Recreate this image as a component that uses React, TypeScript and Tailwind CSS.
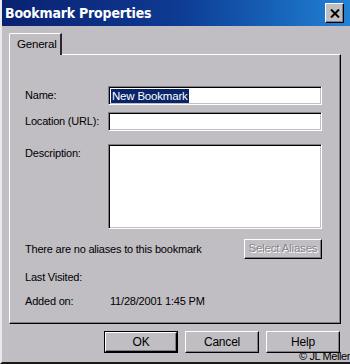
import React from "react";

const sunken =
  "border border-t-[#7f7d82] border-l-[#7f7d82] border-b-white border-r-white shadow-[inset_1px_1px_0_#000,inset_-1px_-1px_0_#c0bdc3] bg-white";
const raised =
  "border border-t-white border-l-white border-b-black border-r-black shadow-[inset_-1px_-1px_0_#807e84]";

function Field({ label, children }: { label: string; children: React.ReactNode }) {
  return (
    <div className="flex items-center">
      <span className="w-[83px]">{label}</span>
      {children}
    </div>
  );
}

function DialogButton({ label, main }: { label: string; main?: boolean }) {
  return (
    <div className={main ? "border border-black" : ""}>
      <button
        className={`${raised} flex items-center justify-center bg-[#c0bdc3] text-[12px] text-black ${
          main ? "w-[72px] h-[20px]" : "w-[74px] h-[22px]"
        }`}
      >
        {label}
      </button>
    </div>
  );
}

export default function App() {
  return (
    <div className="relative w-[350px] h-[364px] overflow-hidden bg-[#c0bdc3] border-l-2 border-l-[#ebe9ee] border-b-2 border-b-[#1a1a1a] flex flex-col text-[11px] tracking-[-0.2px] text-black font-['Liberation_Sans',Arial,sans-serif]">
      {/* title bar */}
      <div className="h-[26px] flex items-center justify-between pl-[3px] pr-[6px] bg-gradient-to-r from-[#0a2171] via-[#0e3a92] to-[#2182d6]">
        <span className="text-white font-bold text-[14px] tracking-[-0.2px] font-['DejaVu_Sans_Condensed','DejaVu_Sans',Verdana,sans-serif]">
          Bookmark Properties
        </span>
        <div className={`${raised} w-[19px] h-[20px] bg-[#c0bdc3] flex items-center justify-center`}>
          <svg width="10" height="9" viewBox="0 0 10 9">
            <path d="M1 0.5 L9 8.5 M9 0.5 L1 8.5" stroke="#000" strokeWidth="2" />
          </svg>
        </div>
      </div>

      {/* tabs + panel */}
      <div className="pl-[7px] pt-[7px]">
        <div className="relative z-10 w-[53px] h-[22px] bg-[#c0bdc3] border-t border-l border-white rounded-tl-[2px] border-r-2 border-r-[#2a282c] flex items-center pl-[7px] text-[11.5px]">
          General
        </div>
        <div className="-mt-[1px] w-[332px] h-[270px] border border-t-white border-l-white border-b-black border-r-black shadow-[inset_-1px_-1px_0_#807e84] pl-[15px] pt-[31px] flex flex-col">
          <Field label="Name:">
            <div className={`${sunken} w-[214px] h-[19px] flex items-center pl-[2px]`}>
              <span className="bg-[#0a246a] text-white px-[1px] leading-[14px] text-[11.5px]">New Bookmark</span>
            </div>
          </Field>
          <div className="mt-[7px]">
            <Field label="Location (URL):">
              <div className={`${sunken} w-[214px] h-[19px]`} />
            </Field>
          </div>
          <div className="mt-[13px] flex items-start">
            <span className="w-[83px] pt-[1px]">Description:</span>
            <div className={`${sunken} w-[214px] h-[85px]`} />
          </div>
          <div className="mt-[10px] flex items-center justify-between w-[297px]">
            <span>There are no aliases to this bookmark</span>
            <div className={`${raised} w-[78px] h-[20px] flex items-center justify-center text-[11.5px] text-[#8a878e] [text-shadow:1px_1px_0_#fff]`}>
              Select Aliases
            </div>
          </div>
          <div className="mt-[11px] h-[14px] flex items-center">Last Visited:</div>
          <div className="mt-[10px] h-[14px] flex items-center">
            <span className="w-[85px]">Added on:</span>
            <span>11/28/2001 1:45 PM</span>
          </div>
        </div>
      </div>

      {/* buttons */}
      <div className="mt-[7px] pl-[102px] flex gap-[7px]">
        <DialogButton label="OK" main />
        <DialogButton label="Cancel" />
        <DialogButton label="Help" />
      </div>

      <span className="absolute right-0 bottom-[-1px] text-[11px] leading-[13px] tracking-[-0.4px]">
        © JL Meller
      </span>
    </div>
  );
}
